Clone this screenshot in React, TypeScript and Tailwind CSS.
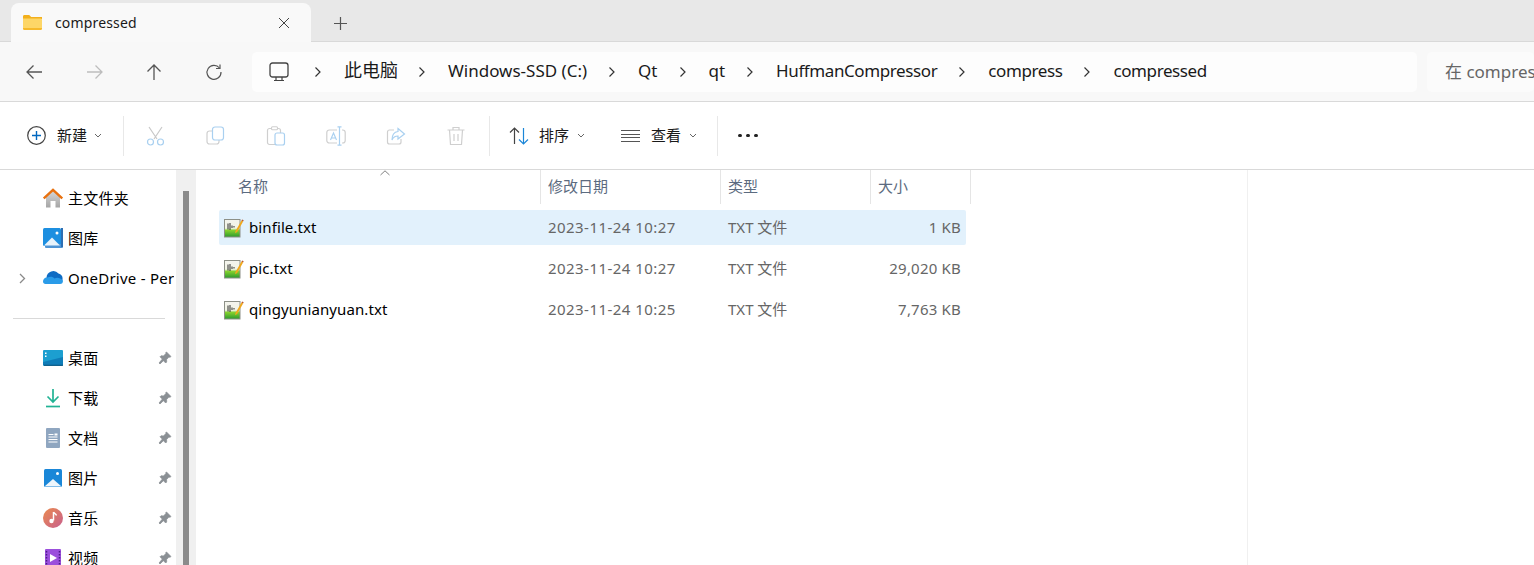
import type { ReactNode } from "react";

const FONT = "font-['Noto_Sans','Noto_Sans_CJK_SC',sans-serif]";

const CRUMBS = [
  { label: "此电脑", cls: "ml-[22px] mr-[20px] text-[18px]" },
  { label: "Windows-SSD (C:)", cls: "ml-[22px] mr-[21px]" },
  { label: "Qt", cls: "ml-[22px] mr-[21px]" },
  { label: "qt", cls: "ml-[22px] mr-[21px]" },
  { label: "HuffmanCompressor", cls: "ml-[22px] mr-[21px] tracking-[-0.4px]" },
  { label: "compress", cls: "ml-[22px] mr-[21px] tracking-[-0.4px]" },
  { label: "compressed", cls: "ml-[22px] mr-[21px] tracking-[-0.4px]" },
];

const FILES = [
  { name: "binfile.txt", date: "2023-11-24 10:27", size: "1 KB", selected: true },
  { name: "pic.txt", date: "2023-11-24 10:27", size: "29,020 KB", selected: false },
  { name: "qingyunianyuan.txt", date: "2023-11-24 10:25", size: "7,763 KB", selected: false },
];

function Ico({ size = 20, children }: { size?: number; children: ReactNode }) {
  return (
    <svg width={size} height={size} viewBox="0 0 20 20" fill="none" className="shrink-0">
      {children}
    </svg>
  );
}

function Chevron() {
  return (
    <svg width="8" height="12" viewBox="0 0 8 12" fill="none" className="shrink-0">
      <path d="M1.5 1.5 6 6l-4.500 4.500" stroke="#333" strokeWidth="1.200" />
    </svg>
  );
}

function Caret() {
  return (
    <svg width="8" height="5" viewBox="0 0 8 5" fill="none" className="shrink-0">
      <path d="M1 1l3 3 3-3" stroke="#666" strokeWidth="1" />
    </svg>
  );
}

function NavArrow({ d, color }: { d: string; color: string }) {
  return (
    <Ico>
      <path d={d} stroke={color} strokeWidth="1.300" />
    </Ico>
  );
}

function FolderIcon() {
  return (
    <svg width="19" height="15" viewBox="0 0 19 15" className="shrink-0">
      <path d="M0 1.500C0 .7.6 0 1.400 0h4.800l2 2H19v2H0z" fill="#f3b01c" />
      <path d="M0 3.500h17.600c.8 0 1.400.6 1.400 1.400v8.700c0 .8-.6 1.400-1.400 1.400H1.400C.6 15 0 14.400 0 13.600z" fill="#fdd667" />
      <path d="M0 13h19v.6c0 .8-.6 1.400-1.400 1.400H1.400C.6 15 0 14.400 0 13.600z" fill="#f6b92b" />
    </svg>
  );
}

function TextFileIcon({ id }: { id: string }) {
  return (
    <svg width="20" height="20" viewBox="0 0 20 20" className="shrink-0">
      <defs>
        <linearGradient id={id} x1="0" y1="0" x2="0" y2="1">
          <stop offset="0" stopColor="#f4f4ee" />
          <stop offset="0.5" stopColor="#f2f4e6" />
          <stop offset="0.62" stopColor="#86d12f" />
          <stop offset="1" stopColor="#2a9a2c" />
        </linearGradient>
      </defs>
      <rect x="0.500" y="1.500" width="15.500" height="17.500" fill={`url(#${id})`} stroke="#8d9087" />
      <path d="M4 5.500v6M6 5v7M8 7.500v2.500M10 8v1.500" stroke="#2c2c2c" strokeWidth="1" />
      <path d="M11.500 13 17.500 2.500l1.600.9-6 10.500-2 1.300z" fill="#f0a81c" />
      <path d="M17.500 2.500l.6-1.100 1.600.9-.6 1.100z" fill="#b9562a" />
    </svg>
  );
}

function Pin() {
  return (
    <svg width="14" height="14" viewBox="0 0 14 14" className="shrink-0">
      <path
        d="M8.500 1l4.500 4.500-1 .8-1-.2-2.400 2.400.1 2.500-1 1-2.300-2.300L2 13l-1-1 3.300-3.900L2 5.800l1-1 2.500.1L7.900 2.500 7.700 1.600z"
        fill="#8a8f94"
        stroke="#8a8f94"
        strokeWidth="0.700"
      />
    </svg>
  );
}

function SideIcon({ kind }: { kind: string }) {
  if (kind === "home")
    return (
      <Ico>
        <defs>
          <linearGradient id="homeg" x1="0" y1="0" x2="0" y2="1">
            <stop offset="0" stopColor="#d6d6d6" />
            <stop offset="1" stopColor="#a5a5a5" />
          </linearGradient>
        </defs>
        <path d="M3 9 10 3l7 6v10.500h-4.500V13h-5v6.500H3z" fill="url(#homeg)" />
        <path d="M.8 10.500 10 1.800l9.200 8.700" stroke="#e8710f" strokeWidth="2.400" />
      </Ico>
    );
  if (kind === "gallery")
    return (
      <Ico>
        <rect x="0" y="0" width="18" height="18" rx="1.500" fill="#1d8fe0" />
        <rect x="2" y="16" width="18" height="4" rx="1" fill="#4f94d4" />
        <path d="M18 0h2v19h-2z" fill="#2d6fb3" />
        <path d="M1 17.500 9 9.500l8 8z" fill="#e8f3fb" />
        <circle cx="14" cy="5" r="1.500" fill="#fff" />
      </Ico>
    );
  if (kind === "cloud")
    return (
      <Ico>
        <path d="M3.500 9.500A6.800 6.800 0 0 1 15.500 5.500 4.800 4.800 0 0 1 19.500 11v1h-16z" fill="#0f6cc4" />
        <path d="M0 13.500C0 11 2 9 4.500 9.500 7 8 10 8.500 11.500 10.500 14 9.300 17 9.500 20 12.500c0 2.500-1 3.500-3 3.500H2.500C1 16 0 15 0 13.500z" fill="#2a9be8" />
      </Ico>
    );
  if (kind === "desktop")
    return (
      <Ico>
        <rect x="0" y="2" width="20" height="16" rx="1" fill="#1c9fd0" />
        <path d="M0 14 20 9v8H0z" fill="#0f7db8" />
        <path d="M1 17.300h19" stroke="#0d3f66" strokeWidth="0.800" />
        <rect x="2" y="4.500" width="1.500" height="1.500" fill="#fff" />
        <rect x="2" y="7.500" width="1.500" height="1.500" fill="#fff" />
      </Ico>
    );
  if (kind === "download")
    return (
      <Ico>
        <path d="M10 1V14M4.500 8.500 10 14l5.500-5.500" stroke="#22b394" strokeWidth="1.700" />
        <path d="M3 18.500h14" stroke="#22b394" strokeWidth="1.700" />
      </Ico>
    );
  if (kind === "doc")
    return (
      <Ico>
        <rect x="3" y="0" width="14" height="20" rx="1" fill="#8fa6c0" />
        <path d="M5.500 6.500h5M5.500 9h9M5.500 11.500h9M5.500 14h9" stroke="#fff" strokeWidth="1" />
        <rect x="11.500" y="5.500" width="3" height="2" fill="#fff" />
      </Ico>
    );
  if (kind === "picture")
    return (
      <Ico>
        <rect x="1" y="1" width="18" height="18" rx="1.500" fill="#1a87d8" />
        <path d="M1.500 18.500 10 11l8.500 7.500z" fill="#eef6fc" />
        <circle cx="14.500" cy="5.500" r="1.500" fill="#fff" />
      </Ico>
    );
  if (kind === "music")
    return (
      <Ico>
        <defs>
          <linearGradient id="musg" x1="0" y1="0" x2="1" y2="1">
            <stop offset="0" stopColor="#ea8a4e" />
            <stop offset="1" stopColor="#c8608e" />
          </linearGradient>
        </defs>
        <circle cx="10" cy="10" r="10" fill="url(#musg)" />
        <path d="M10.500 4v8.500" stroke="#fff" strokeWidth="1.500" />
        <path d="M10.500 4c.5 1.500 2.500 1.800 3 3.500" stroke="#fff" strokeWidth="1.300" />
        <circle cx="8.500" cy="13" r="2.200" fill="#fff" />
      </Ico>
    );
  return (
    <Ico>
      <rect x="2" y="1" width="16" height="18" rx="1" fill="#9b4fdc" />
      <path d="M3.500 3v14M16.500 3v14" stroke="#4b1d86" strokeWidth="1.500" strokeDasharray="1.500 1.500" />
      <path d="M7 6l7 4-7 4z" fill="#fff" />
    </Ico>
  );
}

function SideRow({ kind, label, pin, chevron }: { kind: string; label: string; pin?: boolean; chevron?: boolean }) {
  return (
    <div className="flex h-10 items-center">
      <div className="flex w-[43px] shrink-0 justify-start pl-[19px]">
        {chevron && (
          <svg width="7" height="11" viewBox="0 0 7 11" fill="none">
            <path d="M1 1l4.500 4.500L1 10" stroke="#8a8a8a" strokeWidth="1.300" />
          </svg>
        )}
      </div>
      <SideIcon kind={kind} />
      <span className="ml-[5px] mr-[2px] min-w-0 flex-1 overflow-hidden whitespace-nowrap text-[15px] tracking-[0.25px] text-black">{label}</span>
      {pin && (
        <span className="mr-[4px]">
          <Pin />
        </span>
      )}
    </div>
  );
}

function ToolButton({ children }: { children: ReactNode }) {
  return <div className="flex w-[20px] justify-center">{children}</div>;
}

function Sep() {
  return <div className="h-[40px] w-px shrink-0 bg-[#e8e8e8]" />;
}

function HeaderCell({ label, width, pad }: { label: string; width: string; pad: string }) {
  return (
    <div className={`flex h-[34px] items-center border-r border-[#e5e5e5] pb-[2px] text-[15px] text-[#5c6b80] ${width} ${pad}`}>
      {label}
    </div>
  );
}

export default function App() {
  return (
    <div className={`flex h-screen flex-col overflow-hidden bg-white ${FONT}`}>
      {/* tab strip */}
      <div className="flex h-[42px] shrink-0 items-end border-b border-[#d9d9d9] bg-[#e8e8e8] pl-[11px]">
        <div className="mb-[-1px] flex h-[39px] w-[300px] items-center rounded-t-[8px] bg-[#f9f9f9] pl-[12px] pr-[21px]">
          <FolderIcon />
          <span className="ml-[13px] flex-1 text-[14px] tracking-[0.15px] text-[#1a1a1a]">compressed</span>
          <svg width="12" height="12" viewBox="0 0 12 12" fill="none">
            <path d="M1 1l10 10M11 1 1 11" stroke="#444" strokeWidth="1" />
          </svg>
        </div>
        <div className="mb-[11px] ml-[23px]">
          <svg width="13" height="13" viewBox="0 0 13 13" fill="none">
            <path d="M6.500 0v13M0 6.500h13" stroke="#555" strokeWidth="1.200" />
          </svg>
        </div>
      </div>

      {/* address bar */}
      <div className="flex h-[60px] shrink-0 items-center border-b border-[#d9d9d9] bg-[#f8f8f8] pl-[24px]">
        <div className="flex w-[228px] shrink-0 items-center gap-[40px]">
          <NavArrow d="M18 10H3M9.500 3.500 3 10l6.500 6.500" color="#555" />
          <NavArrow d="M3 10h15M11.500 3.500 18 10l-6.500 6.500" color="#bdbdbd" />
          <NavArrow d="M10 18V3M3.500 9.500 10 3l6.500 6.500" color="#555" />
          <Ico>
            <path d="M15.500 6A7 7 0 1 0 17 10" stroke="#555" strokeWidth="1.200" />
            <path d="M16 2.500V6.500H12" stroke="#555" strokeWidth="1.200" />
          </Ico>
        </div>
        <div className="flex h-[40px] w-[1165px] shrink-0 items-center rounded-[5px] bg-[#fdfdfd] pl-[17px] text-[17px] text-[#1a1a1a]">
          <svg width="20" height="20" viewBox="0 0 20 20" fill="none" className="mr-[25px] shrink-0">
            <rect x="1" y="1" width="18" height="14" rx="2.500" stroke="#444" strokeWidth="1.300" />
            <path d="M7 15v3M13 15v3M5 18.500h10" stroke="#444" strokeWidth="1.200" />
          </svg>
          {CRUMBS.map((c) => (
            <div key={c.label} className="flex items-center">
              <Chevron />
              <span className={`whitespace-nowrap pb-[2px] ${c.cls}`}>{c.label}</span>
            </div>
          ))}
        </div>
        <div className="ml-[10px] flex h-[40px] flex-1 items-center overflow-hidden rounded-[5px] bg-[#fbfbfb] pl-[18px] text-[17px] whitespace-nowrap text-[#666]">
          在 compressed 中搜索
        </div>
      </div>

      {/* command bar */}
      <div className="flex h-[68px] shrink-0 items-center border-b border-[#d9d9d9] pl-[27px] text-[15px] text-[#1a1a1a]">
        <div className="flex w-[96px] shrink-0 items-center">
          <Ico>
            <circle cx="9.500" cy="9.500" r="8.800" stroke="#444" strokeWidth="1.200" />
            <path d="M9.500 5v9M5 9.500h9" stroke="#0067c0" strokeWidth="1.400" />
          </Ico>
          <span className="ml-[10px]">新建</span>
          <span className="ml-[7px]">
            <Caret />
          </span>
        </div>
        <Sep />
        <div className="ml-[22px] flex w-[343px] shrink-0 items-center gap-[40px]">
          <ToolButton>
            <Ico>
              <path d="M3 1l8 12M16 1 8 13" stroke="#c8c8c8" strokeWidth="1.200" />
              <circle cx="4.500" cy="16" r="3" stroke="#a9d0f0" strokeWidth="1.200" />
              <circle cx="14.500" cy="16" r="3" stroke="#a9d0f0" strokeWidth="1.200" />
            </Ico>
          </ToolButton>
          <ToolButton>
            <Ico>
              <rect x="1" y="5" width="12" height="13" rx="2.500" stroke="#cfcfcf" strokeWidth="1.200" />
              <rect x="6.500" y="1" width="11" height="13" rx="2.500" fill="#fff" stroke="#a9d0f0" strokeWidth="1.200" />
            </Ico>
          </ToolButton>
          <ToolButton>
            <Ico>
              <rect x="1.500" y="2.500" width="13" height="16" rx="2" stroke="#cfcfcf" strokeWidth="1.200" />
              <rect x="5.500" y="0.800" width="6" height="3" rx="1" fill="#fff" stroke="#cfcfcf" strokeWidth="1.100" />
              <rect x="9" y="7" width="9.500" height="12" rx="2" fill="#fff" stroke="#a9d0f0" strokeWidth="1.200" />
            </Ico>
          </ToolButton>
          <ToolButton>
            <Ico>
              <rect x="0.800" y="4" width="18.400" height="13" rx="2.500" stroke="#cfcfcf" strokeWidth="1.200" />
              <path d="M4.500 14 7.500 7l3 7M5.500 12h4" stroke="#a9d0f0" strokeWidth="1.100" />
              <rect x="11" y="0" width="5" height="20" fill="#fff" />
              <path d="M13.500 1v18M11.500.8h4M11.500 19.200h4" stroke="#a9d0f0" strokeWidth="1.200" />
            </Ico>
          </ToolButton>
          <ToolButton>
            <Ico>
              <path d="M8 4H3.500a2 2 0 0 0-2 2v10a2 2 0 0 0 2 2H13a2 2 0 0 0 2-2v-3" stroke="#cfcfcf" strokeWidth="1.200" />
              <path d="M12 2.500 18.500 8 12 13v-3C9 10 7 11.500 6 14c0-5 2-8 6-8.500z" stroke="#a9d0f0" strokeWidth="1.200" />
            </Ico>
          </ToolButton>
          <ToolButton>
            <Ico>
              <path d="M1.500 4h17M7 4V1.500h6V4M3.500 4l1 14.500h11l1-14.500M8 8v7M12 8v7" stroke="#cfcfcf" strokeWidth="1.200" />
            </Ico>
          </ToolButton>
        </div>
        <Sep />
        <div className="ml-[19px] flex w-[88px] shrink-0 items-center">
          <Ico>
            <path d="M5.500 18V2M1 6.500l4.500-4.500L10 6.500" stroke="#444" strokeWidth="1.200" />
            <path d="M14.500 2v16M10 13.500l4.500 4.500 4.500-4.500" stroke="#1b86d8" strokeWidth="1.200" />
          </Ico>
          <span className="ml-[10px]">排序</span>
          <span className="ml-[8px]">
            <Caret />
          </span>
        </div>
        <div className="ml-[23px] flex w-[97px] shrink-0 items-center">
          <Ico>
            <path d="M1 4.500h20M1 8.500h20M1 11.500h20M1 15.500h20" stroke="#555" strokeWidth="1.100" />
          </Ico>
          <span className="ml-[11px]">查看</span>
          <span className="ml-[8px]">
            <Caret />
          </span>
        </div>
        <Sep />
        <div className="ml-[20px] flex gap-[4px]">
          <span className="h-[3px] w-[4px] rounded-full bg-[#222]" />
          <span className="h-[3px] w-[4px] rounded-full bg-[#222]" />
          <span className="h-[3px] w-[4px] rounded-full bg-[#222]" />
        </div>
      </div>

      {/* body */}
      <div className="flex min-h-0 flex-1">
        {/* nav pane */}
        <aside className="w-[176px] shrink-0 overflow-hidden pt-[8px]">
          <SideRow kind="home" label="主文件夹" />
          <SideRow kind="gallery" label="图库" />
          <SideRow kind="cloud" label="OneDrive - Personal" chevron />
          <div className="mb-[19px] ml-[13px] mr-[11px] mt-[20px] h-px bg-[#d9d9d9]" />
          <SideRow kind="desktop" label="桌面" pin />
          <SideRow kind="download" label="下载" pin />
          <SideRow kind="doc" label="文档" pin />
          <SideRow kind="picture" label="图片" pin />
          <SideRow kind="music" label="音乐" pin />
          <SideRow kind="video" label="视频" pin />
        </aside>

        {/* scrollbar */}
        <div className="w-[20px] shrink-0 bg-[#f0f0f0] pl-[7px] pt-[21px]">
          <div className="h-full w-[6px] bg-[#8b8b8b]" />
        </div>

        {/* file list */}
        <main className="w-[1052px] min-w-0 shrink-0 border-r border-[#f0f0f0] pl-[23px]">
          <div className="relative flex">
            <svg width="10" height="6" viewBox="0 0 10 6" fill="none" className="absolute left-[161px] top-[0px]">
              <path d="M.5 5 5 .8 9.500 5" stroke="#808080" strokeWidth="1" />
            </svg>
            <HeaderCell label="名称" width="w-[322px]" pad="pl-[19px]" />
            <HeaderCell label="修改日期" width="w-[180px]" pad="pl-[7px]" />
            <HeaderCell label="类型" width="w-[150px]" pad="pl-[7px]" />
            <HeaderCell label="大小" width="w-[100px]" pad="pl-[7px]" />
          </div>
          <div className="mt-[6px] flex w-[747px] flex-col gap-[6px]">
            {FILES.map((f) => (
              <div key={f.name} className={`flex h-[35px] items-center rounded-[2px] text-[15px] ${f.selected ? "bg-[#e2f1fc]" : ""}`}>
                <div className="flex w-[322px] shrink-0 items-center pl-[5px] text-black">
                  <TextFileIcon id={`txt-${f.selected ? "a" : f.size.length}`} />
                  <span className="ml-[5px] tracking-[0.1px]">{f.name}</span>
                </div>
                <span className="w-[180px] shrink-0 pl-[7px] tracking-[0.45px] text-[#666]">{f.date}</span>
                <span className="w-[150px] shrink-0 pl-[7px] text-[#666]">TXT 文件</span>
                <span className="flex-1 pr-[5px] text-right tracking-[0.2px] text-[#666]">{f.size}</span>
              </div>
            ))}
          </div>
        </main>
      </div>
    </div>
  );
}
